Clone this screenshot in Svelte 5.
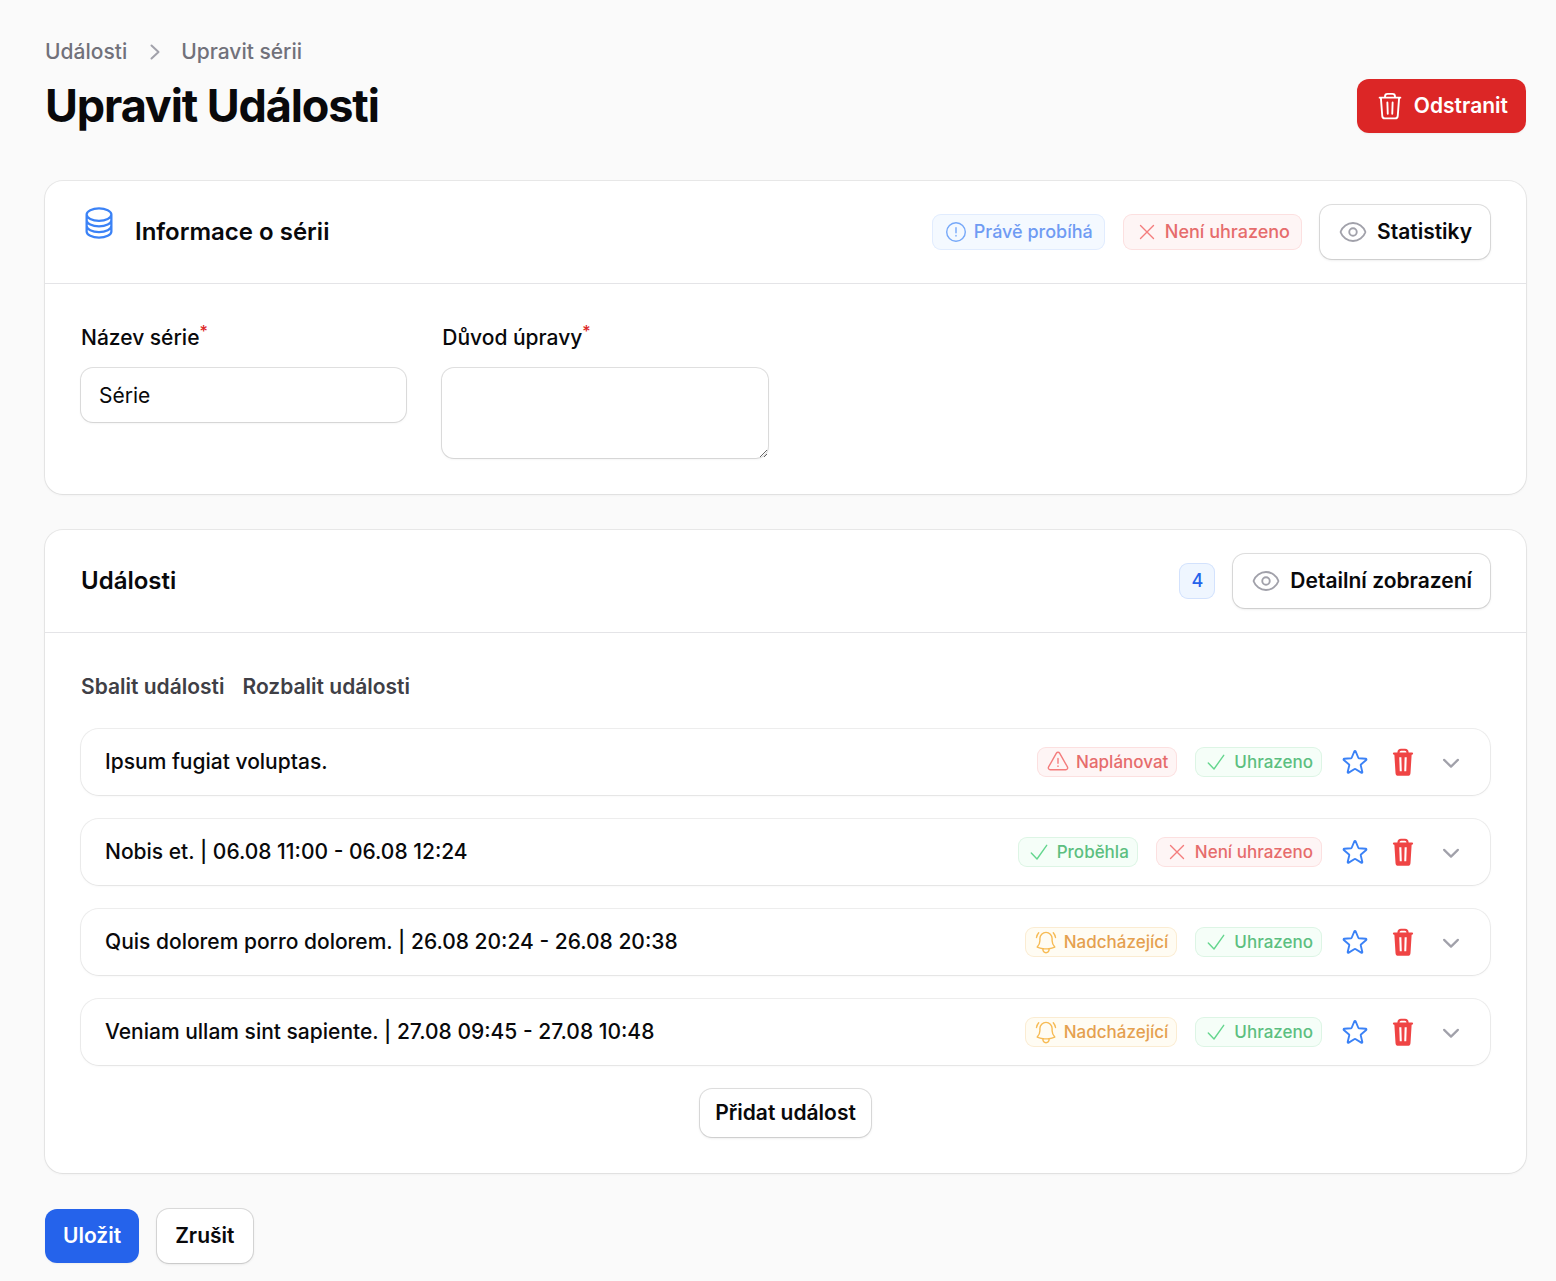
<script>
  const events = [
    { id: 1, name: "Ipsum fugiat voluptas.", badges: ["plan", "paid"] },
    { id: 2, name: "Nobis et. | 06.08 11:00 - 06.08 12:24", badges: ["done", "unpaid"] },
    { id: 3, name: "Quis dolorem porro dolorem. | 26.08 20:24 - 26.08 20:38", badges: ["upcoming", "paid"] },
    { id: 4, name: "Veniam ullam sint sapiente. | 27.08 09:45 - 27.08 10:48", badges: ["upcoming", "paid"] }
  ];

  const BADGES = {
    plan: { label: "Naplánovat", color: "danger", icon: "alert" },
    paid: { label: "Uhrazeno", color: "success", icon: "check" },
    done: { label: "Proběhla", color: "success", icon: "check" },
    unpaid: { label: "Není uhrazeno", color: "danger", icon: "x" },
    upcoming: { label: "Nadcházející", color: "warning", icon: "bell" },
    running: { label: "Právě probíhá", color: "info", icon: "circle" }
  };

  let title = $state("Série");
  let reason = $state("");
</script>

{#snippet icon(name)}
  <svg class="icon {name}" viewBox="0 0 24 24" aria-hidden="true">
    {#if name === "check"}
      <path d="M4.300 13 10 19 19.700 5.300" />
    {:else if name === "x"}
      <path d="M5.500 5.500 18.500 18.500M18.500 5.500 5.500 18.500" />
    {:else if name === "circle"}
      <circle cx="12" cy="12" r="9.300" />
      <path d="M12 7.800v5M12 15.500v.5" />
    {:else if name === "alert"}
      <path d="M10.400 3.200a1.850 1.850 0 0 1 3.200 0l7.800 13.700a1.850 1.850 0 0 1-1.600 2.800H4.200a1.850 1.850 0 0 1-1.600-2.800Z" />
      <path d="M12 8.500v4.800M12 15.900v.5" />
    {:else if name === "bell"}
      <path d="M12 2.400a6.100 6.100 0 0 0-6.100 6.100v2.300c0 2.400-1.100 4.700-2.700 6.300 1.800.8 3.800 1.400 5.800 1.600a24 24 0 0 0 6 0c2-.2 4-.8 5.800-1.600a9.300 9.300 0 0 1-2.700-6.300V8.500A6.100 6.100 0 0 0 12 2.400Z" />
      <path d="M9 18.800a3.100 3.100 0 1 0 6 0M2.500 7.500A10 10 0 0 1 4.700 2.800M21.500 7.500a10 10 0 0 0-2.200-4.700" />
    {:else if name === "eye"}
      <path d="M2.200 12.400a1.200 1.200 0 0 1 0-.8C3.600 7.700 7.500 4.800 12 4.800s8.400 2.900 9.800 6.800c.1.300.1.500 0 .8-1.400 3.900-5.300 6.800-9.800 6.800s-8.400-2.900-9.800-6.800Z" />
      <circle cx="12" cy="12" r="3" />
    {:else if name === "trash"}
      <path d="M3.700 5.300h16.600M4.700 5.300l1.100 14.600a2.100 2.100 0 0 0 2.100 2h8.200a2.100 2.100 0 0 0 2.100-2l1.100-14.600M8 5v-.7a2 2 0 0 1 2-2h4a2 2 0 0 1 2 2V5M9.900 9.200l.3 9M14.100 9.200l-.3 9" />
    {:else if name === "bin"}
      <path class="solid" fill-rule="evenodd" d="M4.800 4.300H7.500A3.100 3.100 0 0 1 10.400 1.400h3.200a3.100 3.100 0 0 1 2.900 2.900h2.700a.9.900 0 0 1 0 1.800h-.3l-.9 14.600a2.400 2.400 0 0 1-2.400 2.300H8.400A2.400 2.400 0 0 1 6 20.700L5.100 6.100h-.3a.9.900 0 0 1 0-1.800ZM9.200 4.300h5.600a1.400 1.400 0 0 0-1.300-1.300h-3a1.400 1.400 0 0 0-1.300 1.300ZM9 8.200l.4 11.200h1.600L10.700 8.200ZM13.300 8.200 13 19.400h1.600L15 8.200Z" />
    {:else if name === "star"}
      <path d="M11.480 3.500a.562.562 0 0 1 1.040 0l2.125 5.110a.563.563 0 0 0 .475.345l5.518.442c.499.040.701.663.321.988l-4.204 3.602a.563.563 0 0 0-.182.557l1.285 5.385a.562.562 0 0 1-.840.610l-4.725-2.885a.562.562 0 0 0-.586 0L6.982 20.540a.562.562 0 0 1-.840-.610l1.285-5.386a.562.562 0 0 0-.182-.557l-4.204-3.602a.562.562 0 0 1 .321-.988l5.518-.442a.563.563 0 0 0 .475-.345L11.480 3.500Z" />
    {:else if name === "database"}
      <path d="M20.250 6.375c0 2.278-3.694 4.125-8.250 4.125S3.750 8.653 3.750 6.375m16.500 0c0-2.278-3.694-4.125-8.250-4.125S3.750 4.097 3.750 6.375m16.500 0v11.250c0 2.278-3.694 4.125-8.250 4.125s-8.250-1.847-8.250-4.125V6.375m16.500 3.750c0 2.278-3.694 4.125-8.250 4.125s-8.250-1.847-8.250-4.125m16.500 3.750c0 2.278-3.694 4.125-8.250 4.125s-8.250-1.847-8.250-4.125" />
    {:else if name === "right"}
      <path d="m9.500 5.500 7 6.500-7 6.500" />
    {:else if name === "down"}
      <path d="M6.500 10.300 12 15.700l5.500-5.400" />
    {/if}
  </svg>
{/snippet}

{#snippet badge(key)}
  <span class="badge {BADGES[key].color}">
    {@render icon(BADGES[key].icon)}
    {BADGES[key].label}
  </span>
{/snippet}

<main class="page">
  <nav class="breadcrumbs" aria-label="Navigace">
    <a href="#udalosti">Události</a>
    {@render icon("right")}
    <a href="#serie">Upravit sérii</a>
  </nav>
  <header class="page-header">
    <h1>Upravit Události</h1>
    <button class="btn red" type="button">{@render icon("trash")}Odstranit</button>
  </header>

  <form onsubmit={(e) => e.preventDefault()}>
    <section class="card">
      <header class="card-header">
        <span class="heading-icon">{@render icon("database")}</span>
        <h2>Informace o sérii</h2>
        <div class="header-side">
          {@render badge("running")}
          {@render badge("unpaid")}
          <button class="btn outline" type="button">{@render icon("eye")}Statistiky</button>
        </div>
      </header>
      <div class="card-body fields">
        <div class="field">
          <label for="title">Název série<sup>*</sup></label>
          <input id="title" type="text" bind:value={title} />
        </div>
        <div class="field">
          <label for="reason">Důvod úpravy<sup>*</sup></label>
          <textarea id="reason" bind:value={reason}></textarea>
        </div>
      </div>
    </section>

    <section class="card">
      <header class="card-header">
        <h2>Události</h2>
        <div class="header-side">
          <span class="badge count">{events.length}</span>
          <button class="btn outline" type="button">{@render icon("eye")}Detailní zobrazení</button>
        </div>
      </header>
      <div class="card-body">
        <div class="toggles">
          <button type="button">Sbalit události</button>
          <button type="button">Rozbalit události</button>
        </div>
        <ul class="events">
          {#each events as event (event.id)}
            <li>
              <h3>{event.name}</h3>
              {#each event.badges as key}
                {@render badge(key)}
              {/each}
              <button class="icon-btn favorite" type="button" aria-label="Oblíbené">{@render icon("star")}</button>
              <button class="icon-btn delete" type="button" aria-label="Smazat">{@render icon("bin")}</button>
              <button class="icon-btn expand" type="button" aria-label="Rozbalit">{@render icon("down")}</button>
            </li>
          {/each}
        </ul>
        <button class="btn outline add" type="button">Přidat událost</button>
      </div>
    </section>

    <div class="actions">
      <button class="btn blue" type="submit">Uložit</button>
      <button class="btn outline" type="button">Zrušit</button>
    </div>
  </form>
</main>

<style>
  :global(body) { margin: 0; background: #fafafa; }
  .page { padding: 37px 30px 18px 45px; font: 21px/30px Inter, "Liberation Sans", sans-serif; color: #09090b; }
  h1, h2, h3 { margin: 0; }
  button, input, textarea { font: inherit; color: inherit; box-sizing: border-box; }
  button { cursor: pointer; }

  .icon { display: block; flex: none; width: 24px; height: 24px; fill: none; stroke: currentColor; stroke-width: 1.5; stroke-linecap: round; stroke-linejoin: round; }
  .solid { fill: currentColor; stroke: none; }

  .breadcrumbs { display: flex; align-items: center; gap: 15px; font-weight: 500; color: #71717a; }
  .breadcrumbs a { color: inherit; text-decoration: none; }
  .right { color: #a1a1aa; stroke-width: 2; }

  .page-header { display: flex; align-items: center; justify-content: space-between; margin: 9px 0 45px; }
  h1 { font-size: 45px; line-height: 60px; font-weight: 700; letter-spacing: -0.025em; }

  .btn { display: inline-flex; align-items: center; justify-content: center; gap: 9px; border: 0; border-radius: 12px; padding: 12px 18px; font-weight: 600; background: #fff; box-shadow: 0 1px 2px rgba(0, 0, 0, 0.05); }
  .btn .icon { width: 30px; height: 30px; }
  .red { background: #dc2626; color: #fff; }
  .blue { background: #2563eb; color: #fff; }
  .outline { box-shadow: 0 0 0 1px rgba(9, 9, 11, 0.12), 0 1px 3px rgba(0, 0, 0, 0.12); }
  .eye { color: #a1a1aa; }

  .card { margin-bottom: 36px; background: #fff; border-radius: 18px; box-shadow: 0 0 0 1px rgba(9, 9, 11, 0.07), 0 1px 3px rgba(0, 0, 0, 0.06); }
  .card-header { display: flex; align-items: center; padding: 24px 36px; border-bottom: 1px solid #e4e4e7; }
  .heading-icon { align-self: flex-start; margin-right: 18px; }
  .database { width: 36px; height: 36px; color: #3b82f6; }
  h2 { font-size: 24px; line-height: 36px; font-weight: 600; }
  .header-side { display: flex; align-items: center; gap: 18px; margin-left: auto; }
  .card-body { padding: 36px; }

  .badge { display: inline-flex; align-items: center; gap: 6px; box-sizing: border-box; padding: 5px 12px; border-radius: 9px; font-size: 18px; line-height: 26px; font-weight: 500; }
  .badge .icon { stroke-width: 1.4; }
  .count { justify-content: center; min-width: 36px; color: #2563eb; background: #eff6ff; box-shadow: inset 0 0 0 1px #d3e2fd; }
  .info { color: #6f9bf3; background: #f4f9ff; box-shadow: inset 0 0 0 1px #e1ecfe; }
  .danger { color: #e66c6c; background: #fef5f5; box-shadow: inset 0 0 0 1px #fce0e0; }
  .success { color: #5cbf80; background: #f5fef8; box-shadow: inset 0 0 0 1px #ddf5e5; }
  .warning { color: #e5a04f; background: #fffcf3; box-shadow: inset 0 0 0 1px #fbecd2; }
  .info .icon { color: #76a8f9; }
  .danger .icon { color: #f47c7c; }
  .success .icon { color: #64d68e; }
  .warning .icon { color: #f7bb54; }

  .fields { display: grid; grid-template-columns: repeat(4, 1fr); gap: 36px; align-items: start; }
  .field { display: grid; gap: 12px; }
  label { font-weight: 500; line-height: 36px; }
  sup { font-size: 16px; line-height: 0; color: #dc2626; }
  input, textarea { display: block; width: 100%; border: 0; border-radius: 12px; padding: 12px 18px; background: #fff; box-shadow: 0 0 0 1px rgba(9, 9, 11, 0.12), 0 1px 3px rgba(0, 0, 0, 0.08); outline: none; }
  input { height: 54px; }
  textarea { height: 90px; resize: vertical; }

  .toggles { display: flex; gap: 18px; margin-bottom: 24px; }
  .toggles button { border: 0; padding: 3px 0; background: none; font-weight: 600; color: #3f3f46; }
  .events { display: grid; gap: 24px; margin: 0 0 24px; padding: 0; list-style: none; }
  .events li { display: flex; align-items: center; gap: 18px; padding: 18px 24px; border-radius: 18px; box-shadow: 0 0 0 1px rgba(9, 9, 11, 0.07), 0 1px 3px rgba(0, 0, 0, 0.05); }
  h3 { flex: 1; font-size: 21px; line-height: 30px; font-weight: 500; }
  .events .badge { padding: 2px 9px; font-size: 17px; }
  .icon-btn { padding: 0; border: 0; background: none; }
  .icon-btn .icon { width: 30px; height: 30px; }
  .favorite { color: #3b82f6; }
  .delete { color: #ef4444; }
  .expand { color: #a1a1aa; }
  .down { stroke-width: 1.8; }
  .add { display: flex; margin: 0 auto; padding: 9px 15px; }
  .actions { display: flex; align-items: center; gap: 18px; }
</style>
